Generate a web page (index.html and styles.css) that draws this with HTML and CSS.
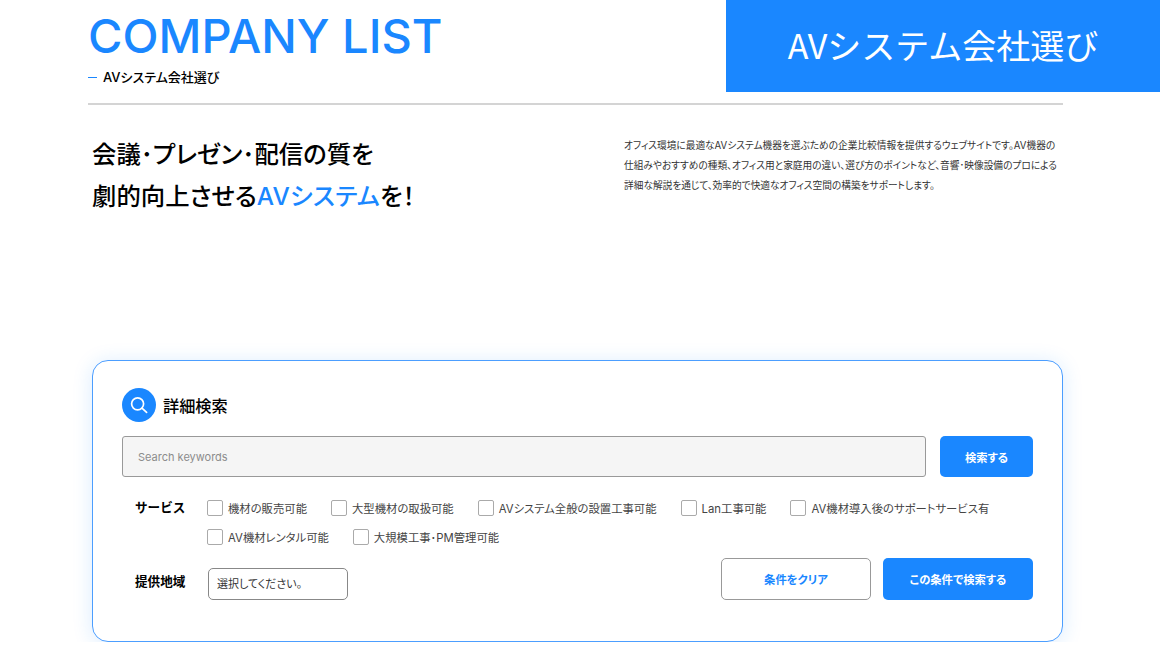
FILE: index.html
```html
<!DOCTYPE html>
<html lang="ja">

<head>
    <meta charset="UTF-8">
    <meta name="viewport" content="width=device-width, initial-scale=1.0">
    <title>AVシステム会社選び</title>
    <link rel="stylesheet" href="styles.css">
</head>

<body>
    <!-- Page Header -->
    <header class="page-header">
        <div class="heading">
            <h1 class="heading-en">COMPANY LIST</h1>
            <p class="heading-sub">AVシステム会社選び</p>
        </div>
        <div class="banner">AVシステム会社選び</div>
    </header>
    <hr class="divider">

    <!-- Intro Section -->
    <section class="intro">
        <h2 class="intro-title">会議･プレゼン･配信の質を<br>劇的向上させる<em>AVシステム</em>を！</h2>
        <p class="intro-text">オフィス環境に最適なAVシステム機器を選ぶための企業比較情報を提供するウェブサイトです。AV機器の仕組みやおすすめの種類、オフィス用と家庭用の違い、選び方のポイントなど、音響･映像設備のプロによる詳細な解説を通じて、効率的で快適なオフィス空間の構築をサポートします。</p>
    </section>

    <!-- Search Section -->
    <section class="search-panel">
        <div class="panel-title">
            <span class="panel-icon">
                <svg width="20" height="20" viewBox="0 0 20 20" fill="none" stroke="#fff" stroke-width="1.7" stroke-linecap="round">
                    <circle cx="8.6" cy="8.8" r="6"></circle>
                    <path d="M13 13.2L17.6 17.4"></path>
                </svg>
            </span>
            <h3>詳細検索</h3>
        </div>

        <div class="keyword-row">
            <input class="keyword-input" type="text" placeholder="Search keywords">
            <button class="btn btn-primary btn-search">検索する</button>
        </div>

        <div class="service-row">
            <div class="row-label">サービス</div>
            <div class="service-list">
                <label class="check"><input type="checkbox">機材の販売可能</label>
                <label class="check"><input type="checkbox">大型機材の取扱可能</label>
                <label class="check"><input type="checkbox">AVシステム全般の設置工事可能</label>
                <label class="check"><input type="checkbox">Lan工事可能</label>
                <label class="check"><input type="checkbox">AV機材導入後のサポートサービス有</label>
                <label class="check"><input type="checkbox">AV機材レンタル可能</label>
                <label class="check"><input type="checkbox">大規模工事･PM管理可能</label>
            </div>
        </div>

        <div class="area-row">
            <div class="row-label">提供地域</div>
            <select class="area-select">
                <option>選択してください。</option>
            </select>
            <div class="area-buttons">
                <button class="btn btn-outline">条件をクリア</button>
                <button class="btn btn-primary">この条件で検索する</button>
            </div>
        </div>
    </section>
</body>

</html>
```

FILE: styles.css
```css
body {
    font-family: Inter, "Noto Sans CJK JP", sans-serif;
    margin: 0;
    background-color: #fff;
    color: #000;
    overflow-x: hidden;
}

.page-header {
    display: flex;
    justify-content: space-between;
    padding-left: 88px;
    height: 92px;
}

.heading-en {
    margin: 8px 0 0;
    font-size: 47px;
    line-height: 56px;
    font-weight: 500;
    color: #1a87ff;
}

.heading-sub {
    display: flex;
    align-items: center;
    margin: 4px 0 0;
    font-size: 13px;
    line-height: 18px;
    font-weight: 500;
    font-feature-settings: "palt";
}

.heading-sub::before {
    content: "";
    width: 9px;
    height: 1px;
    margin-right: 6px;
    background-color: #1a87ff;
}

.banner {
    width: 434px;
    background-color: #1a87ff;
    color: #fff;
    font-family: "Noto Sans CJK JP", sans-serif;
    font-size: 34px;
    line-height: 90px;
    text-align: center;
}

.divider {
    margin: 11px 97px 0 88px;
    border: none;
    border-top: 2px solid #d4d4d4;
}

.intro {
    display: flex;
    justify-content: space-between;
    height: 227px;
    padding: 28px 102px 0 92px;
}

.intro-title {
    margin: 0;
    font-size: 24.4px;
    line-height: 42px;
    font-weight: 500;
    font-feature-settings: "palt";
}

.intro-title em {
    font-style: normal;
    letter-spacing: 0.3px;
    color: #1a87ff;
}

.intro-text {
    width: 438px;
    margin: 3px -4px 0 0;
    font-size: 9.7px;
    line-height: 20px;
    color: #333;
    font-feature-settings: "palt";
}

.search-panel {
    box-sizing: border-box;
    width: 971px;
    height: 282px;
    margin-left: 92px;
    padding: 27px 29px 0;
    background-color: #fff;
    border: 1px solid #4c9eff;
    border-radius: 16px;
    box-shadow: 0 2px 20px rgba(26, 135, 255, 0.16);
}

.panel-title {
    display: flex;
    align-items: center;
    gap: 7px;
}

.panel-title h3 {
    margin: 0;
    font-size: 16.2px;
    font-weight: 500;
}

.panel-icon {
    display: flex;
    justify-content: center;
    align-items: center;
    width: 34px;
    height: 34px;
    border-radius: 50%;
    background-color: #1a87ff;
}

.keyword-row {
    display: flex;
    justify-content: space-between;
    margin-top: 14px;
}

.keyword-input {
    box-sizing: border-box;
    width: 804px;
    height: 41px;
    padding: 0 15px;
    background-color: #f5f5f5;
    border: 1.5px solid #999;
    border-radius: 3px;
    font-family: inherit;
    font-size: 11px;
    outline: none;
}

.keyword-input::placeholder {
    color: #8c8c8c;
}

.btn {
    box-sizing: border-box;
    width: 150px;
    height: 42px;
    border: none;
    border-radius: 5px;
    font-family: inherit;
    font-size: 11.3px;
    font-weight: 700;
    font-feature-settings: "palt";
    cursor: pointer;
}

.btn-primary {
    background-color: #1a87ff;
    color: #fff;
}

.btn-search {
    width: 93px;
    height: 41px;
}

.btn-outline {
    background-color: #fff;
    border: 1px solid #999;
    color: #1a87ff;
}

.row-label {
    width: 73px;
    margin-left: 13px;
    font-size: 12.6px;
    line-height: 20px;
    font-weight: 700;
}

.service-row {
    display: flex;
    margin-top: 21px;
}

.service-row .row-label {
    width: 72px;
}

.service-list {
    display: flex;
    flex-wrap: wrap;
    gap: 9px 24px;
    width: 800px;
}

.check {
    display: flex;
    align-items: center;
    gap: 5px;
    height: 20px;
    font-size: 11.35px;
    color: #444;
    font-feature-settings: "palt";
}

.check input {
    appearance: none;
    box-sizing: border-box;
    width: 16px;
    height: 16px;
    margin: 0;
    background-color: #fff;
    border: 1px solid #aaa;
    border-radius: 2px;
}

.area-row {
    display: flex;
    align-items: flex-end;
    margin-top: 11px;
}

.area-row .row-label {
    margin-bottom: 8px;
}

.area-select {
    appearance: none;
    box-sizing: border-box;
    width: 140px;
    height: 32px;
    padding: 0 8px;
    background-color: #fff;
    border: 1px solid #888;
    border-radius: 5px;
    font-family: inherit;
    font-size: 11px;
    color: #333;
    font-feature-settings: "palt";
}

.area-buttons {
    display: flex;
    gap: 12px;
    margin-left: auto;
}
```
